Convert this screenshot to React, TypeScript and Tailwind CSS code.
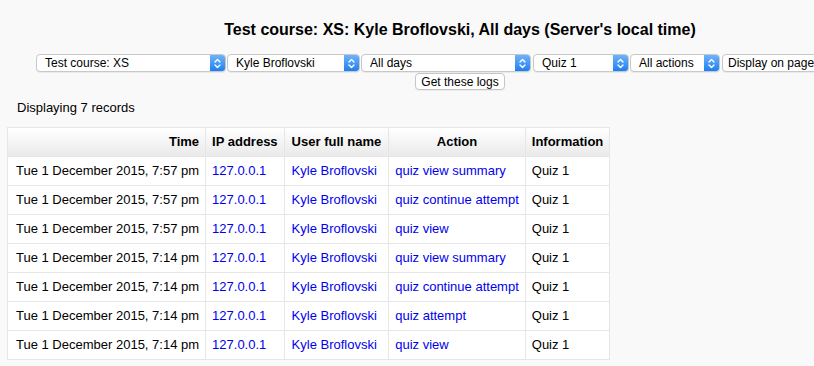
import React from 'react';

type Row = { time: string; action: string };

const rows: Row[] = [
    { time: 'Tue 1 December 2015, 7:57 pm', action: 'quiz view summary' },
    { time: 'Tue 1 December 2015, 7:57 pm', action: 'quiz continue attempt' },
    { time: 'Tue 1 December 2015, 7:57 pm', action: 'quiz view' },
    { time: 'Tue 1 December 2015, 7:14 pm', action: 'quiz view summary' },
    { time: 'Tue 1 December 2015, 7:14 pm', action: 'quiz continue attempt' },
    { time: 'Tue 1 December 2015, 7:14 pm', action: 'quiz attempt' },
    { time: 'Tue 1 December 2015, 7:14 pm', action: 'quiz view' },
];

function FakeSelect({ label, className, pad = 'pl-[8px]' }: { label: string; className: string; pad?: string }) {
    return (
        <div className={`flex h-[18px] items-stretch rounded-[4px] border border-[#c8c8c8] bg-white shadow-[0_1px_0_rgba(0,0,0,0.06)] ${className}`}>
            <span className={`flex-1 overflow-hidden whitespace-nowrap text-[12px] leading-[16px] text-black ${pad}`}>{label}</span>
            <span className="flex w-[15px] items-center justify-center rounded-r-[3px] bg-gradient-to-b from-[#6cb3fa] to-[#1a7ff0]">
                <svg width="7" height="11" viewBox="0 0 7 11" fill="none" stroke="white" strokeWidth="1.4" strokeLinecap="round" strokeLinejoin="round">
                    <path d="M1 4 L3.5 1.5 L6 4" />
                    <path d="M1 7 L3.5 9.5 L6 7" />
                </svg>
            </span>
        </div>
    );
}

export default function App() {
    return (
        <div className="h-[366px] w-[814px] overflow-hidden bg-[#f9f9f9]" style={{ fontFamily: '"Liberation Sans", Arial, sans-serif' }}>
            <div className="w-[920px]">
                <h2 className="pt-[21px] text-center text-[16px] font-bold leading-[18px] text-black">
                    Test course: XS: Kyle Broflovski, All days (Server's local time)
                </h2>
                <div className="mt-[15px] flex gap-[1px] pl-[36px]">
                    <FakeSelect label="Test course: XS" className="w-[190px]" />
                    <FakeSelect label="Kyle Broflovski" className="w-[133px]" />
                    <FakeSelect label="All days" className="w-[170px]" />
                    <FakeSelect label="Quiz 1" className="ml-[1px] w-[96px]" />
                    <FakeSelect label="All actions" className="w-[90px]" />
                    <FakeSelect label="Display on page" className="ml-[1px] w-[110px]" pad="pl-[5px]" />
                </div>
                <div className="flex justify-center">
                    <button className="mt-[1px] h-[17px] w-[90px] rounded-[4px] border border-[#c6c6c6] bg-white text-[12px] leading-[14px] text-black shadow-[0_1px_0_rgba(0,0,0,0.05)]">
                        Get these logs
                    </button>
                </div>
                <p className="mt-[10px] pl-[17px] text-[13px] leading-[16px] text-black">Displaying 7 records</p>
                <table className="ml-[7px] mt-[11px] border-collapse whitespace-nowrap text-[13px] leading-[16px]">
                    <thead>
                        <tr className="h-[29px] bg-gradient-to-b from-white to-[#e9e9e9]">
                            <th className="border border-[#e6e6e6] pl-[8px] pr-[6px] text-right font-bold">Time</th>
                            <th className="border border-[#e6e6e6] px-[6px] text-left font-bold">IP address</th>
                            <th className="border border-[#e6e6e6] px-[7px] text-left font-bold">User full name</th>
                            <th className="border border-[#e6e6e6] px-[6px] text-center font-bold">Action</th>
                            <th className="border border-[#e6e6e6] px-[6px] text-left font-bold">Information</th>
                        </tr>
                    </thead>
                    <tbody>
                        {rows.map((r, i) => (
                            <tr key={i} className="h-[29px] bg-white">
                                <td className="border border-[#e6e6e6] pl-[8px] pr-[6px] text-black">{r.time}</td>
                                <td className="border border-[#e6e6e6] px-[6px] text-[#0000ee]">127.0.0.1</td>
                                <td className="border border-[#e6e6e6] px-[7px] text-[#0000ee]">Kyle Broflovski</td>
                                <td className="border border-[#e6e6e6] px-[6px] text-[#0000ee]">{r.action}</td>
                                <td className="border border-[#e6e6e6] px-[6px] text-black">Quiz 1</td>
                            </tr>
                        ))}
                    </tbody>
                </table>
            </div>
        </div>
    );
}
